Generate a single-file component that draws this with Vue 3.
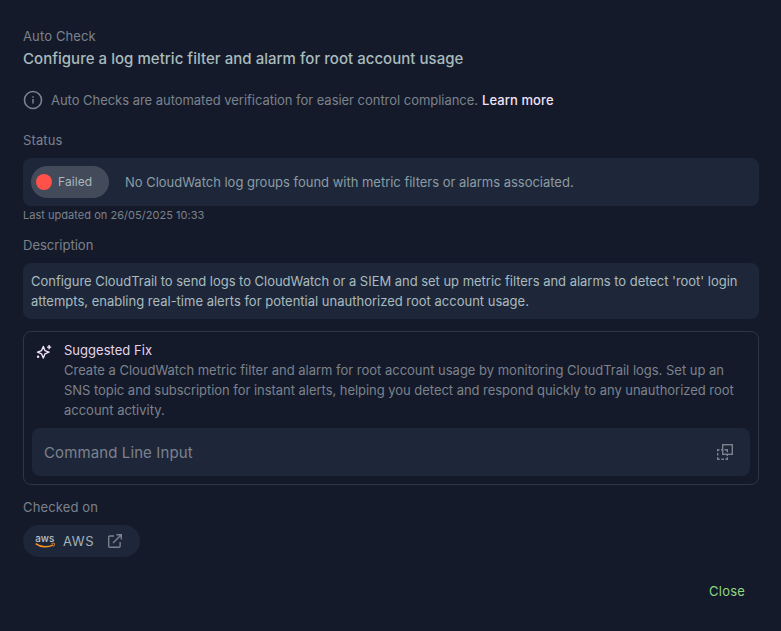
<script setup>
const descriptionLines = [
  "Configure CloudTrail to send logs to CloudWatch or a SIEM and set up metric filters and alarms to detect 'root' login",
  'attempts, enabling real-time alerts for potential unauthorized root account usage.',
]
const fixLines = [
  'Create a CloudWatch metric filter and alarm for root account usage by monitoring CloudTrail logs. Set up an',
  'SNS topic and subscription for instant alerts, helping you detect and respond quickly to any unauthorized root',
  'account activity.',
]
</script>

<template>
  <main class="dialog">
    <header>
      <div class="label">Auto Check</div>
      <h1>Configure a log metric filter and alarm for root account usage</h1>
    </header>

    <div class="info">
      <svg class="info-icon" width="20" height="20" viewBox="0 0 20 20" fill="none" stroke="currentColor" stroke-width="1.6">
        <circle cx="10" cy="10" r="8.5" />
        <path d="M10 9v4.4M10 6.2v1.5" stroke-width="1.5" />
      </svg>
      <span class="info-text">Auto Checks are automated verification for easier control compliance.</span>
      <a class="learn">Learn more</a>
    </div>

    <div class="label status-label">Status</div>
    <section class="status">
      <div class="badge"><i class="dot"></i><span>Failed</span></div>
      <span class="message">No CloudWatch log groups found with metric filters or alarms associated.</span>
    </section>
    <div class="updated">Last updated on 26/05/2025 10:33</div>

    <div class="label description-label">Description</div>
    <section class="description">
      <div v-for="line in descriptionLines" :key="line">{{ line }}</div>
    </section>

    <section class="fix">
      <div class="fix-body">
        <svg class="sparkle" width="16" height="16" viewBox="0 0 16 16" fill="none" stroke="currentColor" stroke-width="1.4" stroke-linejoin="round">
          <path d="M7.3 2.4 8.9 6.6 13 8.2 8.9 9.9 7.3 14 5.6 9.9 1.5 8.2 5.6 6.6Z" />
          <path d="M13.1 1v4.2M11 3.1h4.2" />
          <circle cx="2.1" cy="12.7" r="1.2" fill="currentColor" stroke="none" />
        </svg>
        <div>
          <h2>Suggested Fix</h2>
          <div v-for="line in fixLines" :key="line" class="fix-line">{{ line }}</div>
        </div>
      </div>
      <div class="command">
        <span>Command Line Input</span>
        <svg width="18" height="18" viewBox="0 0 18 18" fill="none" stroke="currentColor" stroke-width="1.4">
          <rect x="6.7" y="1.7" width="9.6" height="9.6" />
          <path d="M3.5 6.7H1.7v1.8M1.7 10v2.6M1.7 14.2v2.1h2M5.3 16.3H8M9.5 16.3h1.8v-2M11.3 12.9v-1.6M5 6.7h2M8.5 6.7h2.8v2.5" />
        </svg>
      </div>
    </section>

    <div class="label checked-label">Checked on</div>
    <a class="chip">
      <svg class="aws" width="20" height="16" viewBox="0 0 20 16">
        <text x="0.2" y="8.6" textLength="19" lengthAdjust="spacingAndGlyphs">aws</text>
        <path d="M.7 10.6C6 14.6 13 14.7 18.2 11.8" fill="none" stroke="#f79422" stroke-width="1.4" />
        <path d="M16.5 10.5c1.5-.4 2.9-.3 3 0 .3.6-.2 2-1.1 3" fill="none" stroke="#f79422" stroke-width=".9" />
      </svg>
      <span class="provider">AWS</span>
      <svg class="external" width="16" height="16" viewBox="0 0 16 16" fill="none" stroke="currentColor" stroke-width="1.4">
        <path d="M7 3H2.8C2.1 3 1.7 3.4 1.7 4v9.2c0 .7.4 1.1 1.1 1.1H12c.7 0 1.1-.4 1.1-1.1V9M9.5 1.7h4.8v4.8M14.3 1.7 6 10" />
      </svg>
    </a>

    <footer><button type="button">Close</button></footer>
  </main>
</template>

<style>
body { background: #141a2a; }
</style>

<style scoped>
.dialog {
  box-sizing: border-box;
  width: 781px;
  height: 631px;
  padding: 26px 22px 0 23px;
  overflow: hidden;
  background: #141a2a;
  color: #7c828c;
  font: 400 13px/20px Inter, "Liberation Sans", sans-serif;
  white-space: nowrap;
}
.label { height: 20px; letter-spacing: .13px; }
h1 { height: 24px; margin: 0; color: #a9bbbd; font-size: 15px; line-height: 25px; font-weight: 500; letter-spacing: .035px; }
.info { display: flex; align-items: center; height: 20px; margin-top: 20px; }
.info-icon { margin-right: 8px; flex: none; }
.info-text { letter-spacing: -.035px; }
.learn { margin-left: 4px; color: #f1e3f8; font-weight: 500; letter-spacing: .09px; }
.status-label { margin-top: 20px; }
.status {
  display: flex;
  align-items: center;
  box-sizing: border-box;
  height: 48px;
  margin-top: 8px;
  padding: 8px;
  border-radius: 8px;
  background: #1e273a;
  color: #8b9ca2;
}
.badge {
  display: flex;
  align-items: center;
  box-sizing: border-box;
  width: 78px;
  height: 32px;
  padding-left: 5px;
  border-radius: 16px;
  background: #434a5a;
  color: #a9b8bd;
  font-size: 12px;
  letter-spacing: .1px;
}
.dot { width: 16px; height: 16px; margin-right: 6px; border-radius: 50%; background: #ff5149; }
.message { margin-left: 16px; letter-spacing: -.014px; }
.updated { height: 18px; font-size: 11px; line-height: 18px; letter-spacing: .03px; }
.description-label { margin-top: 11px; letter-spacing: 0; }
.description {
  box-sizing: border-box;
  height: 56px;
  margin-top: 8px;
  padding: 8px;
  border-radius: 8px;
  background: #1e273a;
  color: #a9bbbf;
}
.description div:first-child { letter-spacing: -.03px; }
.fix {
  box-sizing: border-box;
  height: 154px;
  margin-top: 12px;
  padding: 8px;
  border: 1px solid #303546;
  border-radius: 8px;
}
.fix-body { display: flex; height: 88px; padding-left: 4px; }
.fix-line { letter-spacing: -.01px; }
.fix-line:nth-child(3) { letter-spacing: -.038px; }
.sparkle { flex: none; margin: 4px 12px 0 0; color: #f1e3f8; }
h2 { margin: 0; color: #e4d5ed; font-size: 13px; line-height: 20px; font-weight: 400; letter-spacing: .03px; }
.command {
  display: flex;
  align-items: center;
  justify-content: space-between;
  height: 48px;
  padding: 0 16px 0 12px;
  border-radius: 8px;
  background: #1e273a;
  font-size: 15px;
  letter-spacing: .11px;
}
.command span { padding-top: 2px; }
.checked-label { margin-top: 12px; }
.chip {
  display: flex;
  align-items: center;
  box-sizing: border-box;
  width: 117px;
  height: 32px;
  margin-top: 8px;
  padding-left: 12px;
  border-radius: 16px;
  background: #1e273a;
  color: #a3b3b9;
}
.aws { margin-right: 8px; }
.aws text { fill: #b8c5ca; font: 500 10px Inter, sans-serif; }
.provider { letter-spacing: .6px; }
.external { margin-left: 13px; color: #7c828c; }
footer { display: flex; justify-content: flex-end; margin-top: 24px; padding-right: 14px; }
button { padding: 0; border: 0; background: none; color: #8ed781; font: inherit; letter-spacing: .2px; }
</style>
